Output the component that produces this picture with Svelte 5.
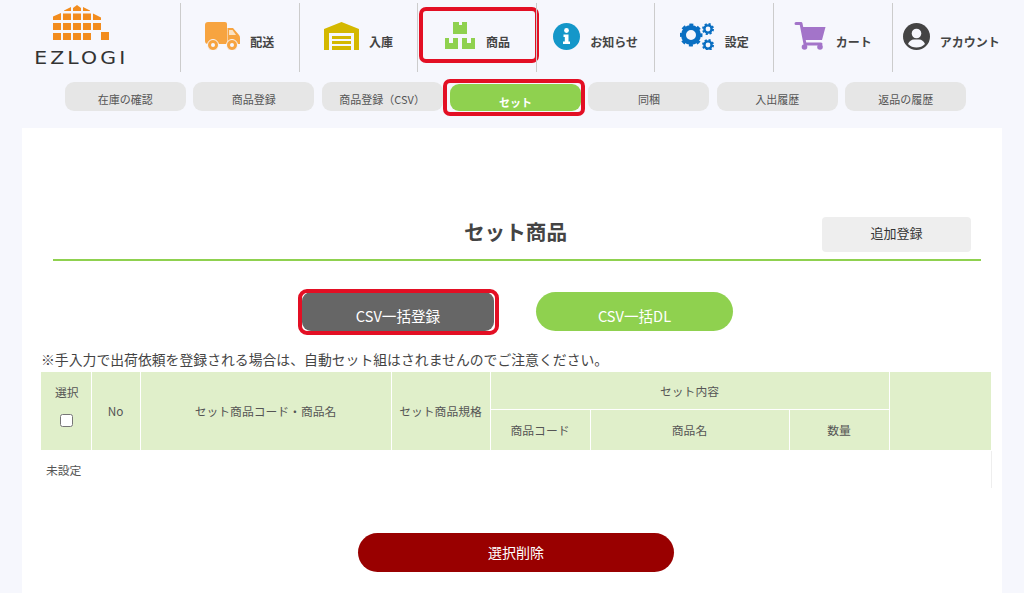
<script lang="ts">
    const subTabs = [
        { label: "在庫の確認" },
        { label: "商品登録" },
        { label: "商品登録（CSV）" },
        { label: "セット", active: true },
        { label: "同梱" },
        { label: "入出履歴" },
        { label: "返品の履歴" },
    ];

    // logo tiles, left edge of each column and top of each row
    const logoCols = [1, 11, 21, 31, 41];
    const logoRows = [
        { y: 18, cols: logoCols },
        { y: 28, cols: logoCols.slice(0, 4) },
    ];
</script>

<header class="topbar">
    <div class="logo">
        <svg width="58" height="36" viewBox="0 0 58 36" aria-hidden="true">
            <g fill="#f28c1e">
                <path d="M21 6 V3 L25 0 L29 3 V6 Z" />
                <path d="M12 6 V5.500 L19 2 V6 Z M31 2 L38 5.500 V6 H31 Z" />
                <path d="M1 15 V11.500 L9 8 V15 Z M41 8.500 L49 12.500 V15 H41 Z" />
                <rect x="11" y="8.500" width="8" height="6.500" />
                <rect x="21" y="8.500" width="8" height="6.500" />
                <rect x="31" y="8.500" width="8" height="6.500" />
                {#each logoRows as row}
                    {#each row.cols as x}
                        <rect {x} y={row.y} width="8" height="7" />
                    {/each}
                {/each}
                <rect x="49" y="27" width="8" height="8" />
            </g>
        </svg>
        <span class="logo-text">EZLOGI</span>
    </div>

    <a class="nav-item">
        <svg width="35" height="28" viewBox="0 0 35 28" aria-hidden="true">
            <path d="M3 0 H20 Q22 0 22 2 V22 H3 Q0 22 0 19 V3 Q0 0 3 0 Z" fill="#f7a440" />
            <path d="M22.500 6 H28 L34 13 Q35 14 35 16 V22 H22.500 Z" fill="#f7a440" />
            <path d="M24 8 H27.500 L31 13 H24 Z" fill="#fbe3c4" />
            <circle cx="8" cy="23" r="5.500" fill="#f7a440" stroke="#f6f7fd" stroke-width="1" />
            <circle cx="8" cy="23" r="2" fill="#f6f7fd" />
            <circle cx="27" cy="23" r="5.500" fill="#f7a440" stroke="#f6f7fd" stroke-width="1" />
            <circle cx="27" cy="23" r="2" fill="#f6f7fd" />
        </svg>
        <span>配送</span>
    </a>
    <a class="nav-item">
        <svg width="35" height="28" viewBox="0 0 35 28" aria-hidden="true">
            <path d="M0 7 L17.500 0 L35 7 V28 H30 V11 H5 V28 H0 Z" fill="#d4b800" />
            <path d="M8 14 H27 V17 H8 Z M8 19 H27 V22 H8 Z M8 24 H27 V28 H8 Z" fill="#d4b800" />
        </svg>
        <span>入庫</span>
    </a>
    <a class="nav-item marked">
        <svg width="32" height="28" viewBox="0 0 32 28" aria-hidden="true">
            <path d="M9 0 H15 V3 H18 V0 H23 V12 H9 Z" fill="#8fd14f" />
            <path d="M1 16 H5 V21 H9 V16 H14 V27 H1 Z" fill="#8fd14f" />
            <path d="M18 16 H23 V21 H27 V16 H31 V27 H18 Z" fill="#8fd14f" />
        </svg>
        <span>商品</span>
    </a>
    <a class="nav-item">
        <svg width="27" height="27" viewBox="0 0 27 27" aria-hidden="true">
            <circle cx="13.500" cy="13.500" r="13.500" fill="#1497c9" />
            <circle cx="13.500" cy="7.500" r="2.400" fill="#fff" />
            <path d="M10.500 11.500 H15.500 V18.500 H17 V21 H10 V18.500 H11.800 V14 H10.500 Z" fill="#fff" />
        </svg>
        <span>お知らせ</span>
    </a>
    <a class="nav-item">
        <svg width="35" height="28" viewBox="0 0 35 28" aria-hidden="true">
            <g fill="none" stroke="#0a6fc2">
                <circle cx="11" cy="13" r="7.500" stroke-width="5" />
                <circle cx="11" cy="13" r="9.500" stroke-width="4" stroke-dasharray="3.700 3.760" stroke-dashoffset="1.850" />
                <circle cx="28" cy="7" r="3.600" stroke-width="2.400" />
                <circle cx="28" cy="7" r="4.800" stroke-width="2.400" stroke-dasharray="2 1.770" />
                <circle cx="28" cy="23" r="3.600" stroke-width="2.400" />
                <circle cx="28" cy="23" r="4.800" stroke-width="2.400" stroke-dasharray="2 1.770" />
            </g>
        </svg>
        <span>設定</span>
    </a>
    <a class="nav-item">
        <svg width="32" height="28" viewBox="0 0 32 28" aria-hidden="true">
            <path d="M2 1.500 H7 L11 22 H27" fill="none" stroke="#a374c9" stroke-width="3" stroke-linecap="round" stroke-linejoin="round" />
            <path d="M7.500 5 H31.500 L28 18 H10 Z" fill="#a374c9" />
            <circle cx="10.500" cy="25" r="2.800" fill="#a374c9" />
            <circle cx="26" cy="25" r="2.800" fill="#a374c9" />
        </svg>
        <span>カート</span>
    </a>
    <a class="nav-item">
        <svg width="27" height="27" viewBox="0 0 27 27" aria-hidden="true">
            <circle cx="13.500" cy="13.500" r="13.500" fill="#444" />
            <circle cx="13.500" cy="10.500" r="4.800" fill="#f6f7fd" />
            <path d="M5 21 Q7 16.500 11 16.500 H16 Q20 16.500 22 21 Q18.500 24.500 13.500 24.500 Q8.500 24.500 5 21 Z" fill="#f6f7fd" />
        </svg>
        <span>アカウント</span>
    </a>
</header>

<nav class="subnav">
    {#each subTabs as tab}
        <a class="pill" class:active={tab.active}>{tab.label}</a>
    {/each}
</nav>

<main class="panel">
    <div class="title-row">
        <h1>セット商品</h1>
        <button class="add-btn">追加登録</button>
    </div>

    <div class="csv-row">
        <button class="csv-btn upload">CSV一括登録</button>
        <button class="csv-btn download">CSV一括DL</button>
    </div>

    <p class="note">※手入力で出荷依頼を登録される場合は、自動セット組はされませんのでご注意ください。</p>

    <table>
        <colgroup>
            <col class="c-select" />
            <col class="c-no" />
            <col class="c-code" />
            <col class="c-spec" />
            <col class="c-item" />
            <col class="c-name" />
            <col class="c-qty" />
            <col class="c-rest" />
        </colgroup>
        <thead>
            <tr class="head-top">
                <th rowspan="2" class="select-col">
                    <div>選択</div>
                    <input type="checkbox" />
                </th>
                <th rowspan="2">No</th>
                <th rowspan="2">セット商品コード・商品名</th>
                <th rowspan="2">セット商品規格</th>
                <th colspan="3">セット内容</th>
                <th rowspan="2"></th>
            </tr>
            <tr class="head-bottom">
                <th>商品コード</th>
                <th>商品名</th>
                <th>数量</th>
            </tr>
        </thead>
        <tbody>
            <tr>
                <td colspan="8">未設定</td>
            </tr>
        </tbody>
    </table>

    <div class="delete-row">
        <button class="delete-btn">選択削除</button>
    </div>
</main>

<style>
    :global(body) {
        background: #f6f7fd;
        font-family: "Noto Sans CJK JP", "Liberation Sans", sans-serif;
        color: #444;
        overflow: hidden;
    }

    .topbar {
        display: flex;
        height: 72px;
    }

    .logo {
        width: 180px;
        flex: none;
        display: flex;
        flex-direction: column;
        align-items: center;
        box-sizing: border-box;
        padding-top: 5px;
        padding-right: 18px;
    }

    .logo svg {
        display: block;
    }

    .logo-text {
        margin-top: 8px;
        font-family: "DejaVu Sans", sans-serif;
        font-size: 17px;
        line-height: 19px;
        letter-spacing: 2.6px;
        transform: scaleX(1.2);
        color: #333;
    }

    .nav-item {
        position: relative;
        flex: none;
        width: 118.6px;
        box-sizing: border-box;
        margin-top: 3px;
        padding-bottom: 22px;
        border-left: 1px solid #ccc;
        display: flex;
        align-items: flex-end;
        justify-content: center;
        gap: 10px;
        font-size: 12px;
        font-weight: 700;
        line-height: 18px;
    }

    .nav-item svg {
        display: block;
    }

    .nav-item span {
        white-space: nowrap;
        margin-bottom: -1px;
    }

    .marked::after {
        content: "";
        position: absolute;
        top: 4px;
        bottom: 9px;
        left: 1px;
        right: -3px;
        border: 4px solid #e30f24;
        border-radius: 7px;
    }

    .subnav {
        display: flex;
        justify-content: center;
        gap: 7.4px;
        margin-top: 10px;
        padding-left: 7px;
    }

    .pill {
        position: relative;
        width: 121px;
        height: 29px;
        box-sizing: border-box;
        border-radius: 9px;
        background: #e6e6e6;
        font-size: 11px;
        color: #555;
        display: flex;
        align-items: center;
        justify-content: center;
        padding-top: 5px;
    }

    .pill.active {
        width: 131px;
        background: #8fd14f;
        color: #fff;
        font-weight: 700;
        margin-top: 2px;
        height: 27px;
        padding-top: 8px;
    }

    .pill.active::after {
        content: "";
        position: absolute;
        inset: -5px -4px -5px -7px;
        border: 4px solid #e30f24;
        border-radius: 7px;
    }

    .panel {
        margin: 17px 22px 0;
        height: 465px;
        padding: 89px 21px 0 19px;
        background: #fff;
        box-sizing: border-box;
    }

    .title-row {
        display: grid;
        grid-template-columns: 1fr auto 1fr;
        align-items: center;
        margin: 0 0 0 12px;
        padding: 0 10px 7px 0;
        border-bottom: 2px solid #8fd14f;
    }

    h1 {
        grid-column: 2;
        margin: 0;
        padding: 0 0 6px 7px;
        font-size: 20.6px;
        font-weight: 700;
        line-height: 29px;
        color: #444;
    }

    button {
        border: none;
        font-family: inherit;
        padding: 0;
    }

    .add-btn {
        grid-column: 3;
        justify-self: end;
        width: 149px;
        height: 35px;
        padding-bottom: 4px;
        background: #eee;
        border-radius: 4px;
        font-size: 13px;
        color: #333;
    }

    .csv-row {
        display: flex;
        justify-content: center;
        gap: 42px;
        margin-top: 31px;
        padding-left: 13px;
    }

    .csv-btn {
        position: relative;
        height: 39px;
        color: #fff;
        font-size: 14.6px;
        padding-top: 7px;
        border-radius: 20px;
    }

    .upload {
        width: 192px;
        background: #666;
        border-radius: 9px;
    }

    .upload::after {
        content: "";
        position: absolute;
        inset: -3px -5px -4px -4px;
        border: 4px solid #e30f24;
        border-radius: 9px;
    }

    .download {
        width: 197px;
        background: #8fd14f;
    }

    .note {
        margin: 18px 0 0;
        font-size: 13.85px;
        line-height: 20px;
        color: #444;
    }

    table {
        width: 950px;
        margin-top: 3px;
        table-layout: fixed;
        border-collapse: collapse;
        font-size: 11.8px;
        color: #555;
    }

    .c-select { width: 50px; }
    .c-no { width: 49px; }
    .c-code { width: 251px; }
    .c-spec { width: 99px; }
    .c-item { width: 100px; }
    .c-name { width: 199px; }
    .c-qty { width: 100px; }
    .c-rest { width: 102px; }

    th {
        background: #e0efca;
        border: 1px solid #fff;
        border-top: none;
        font-weight: 400;
        padding: 0;
        text-align: center;
    }

    th:first-child {
        border-left: none;
    }

    th:last-child {
        border-right: none;
    }

    .head-top {
        height: 37px;
    }

    .head-bottom {
        height: 41px;
    }

    th.select-col {
        vertical-align: top;
        padding: 11px 0 0 2px;
    }

    .select-col div {
        line-height: 18px;
        margin-bottom: 13px;
    }

    .select-col input {
        display: block;
        width: 13px;
        height: 13px;
        margin: 0 auto;
    }

    td {
        height: 37px;
        padding: 0 0 0 5px;
        border-right: 1px solid #eee;
        border-top: 1px solid #eee;
    }

    .delete-row {
        display: flex;
        justify-content: center;
        margin-top: 45px;
        padding-left: 10px;
    }

    .delete-btn {
        width: 316px;
        height: 39px;
        border-radius: 20px;
        background: #990000;
        color: #fff;
        font-size: 14px;
    }
</style>
